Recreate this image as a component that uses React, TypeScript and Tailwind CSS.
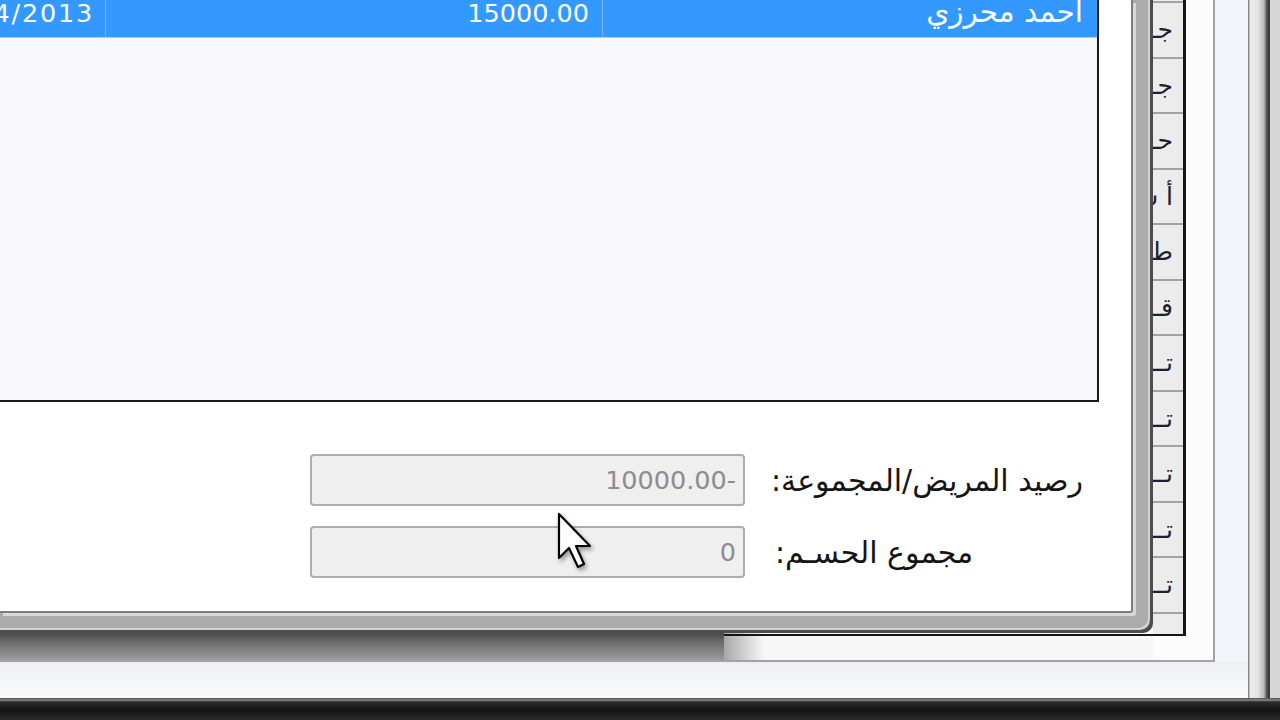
import React from 'react'

const cells = ['جــلسة', 'جــلسة', 'حــشوة', 'أ شعة', 'طــقم', 'قــلع', 'تــنظيف', 'تــبييض', 'تــاج', 'تــقويم', 'تــركيب']

function Cursor() {
  return (
    <svg
      className="absolute left-[557px] top-[512px] drop-shadow-[2px_3px_2px_rgba(0,0,0,0.35)]"
      width="40"
      height="60"
      viewBox="0 0 40 60"
    >
      <path
        d="M2 2 L2 46 L12 36 L21 55 L27 52 L19 34 L33 34 Z"
        fill="white"
        stroke="black"
        strokeWidth="2.2"
        strokeLinejoin="round"
      />
    </svg>
  )
}

function ListView() {
  return (
    <div className="w-[1099px] h-[402px] shrink-0 border-r-2 border-b-2 border-[#1a1a1a] bg-[#f8f8fc]">
      <div className="h-[38px] flex bg-[#3399ff] border-b border-[#b9cde3] text-white overflow-hidden">
        <div className="w-[106px] border-r border-[#7fb0e6] flex justify-end overflow-hidden pr-[11px]">
          <span className="shrink-0 whitespace-nowrap leading-[30px] -mt-[2px] tracking-[1.8px]">4/2013</span>
        </div>
        <div className="w-[497px] border-r border-[#7fb0e6] flex justify-end pr-[13px]">
          <span className="shrink-0 whitespace-nowrap leading-[30px] -mt-[2px]">15000.00</span>
        </div>
        <div className="flex-1 flex justify-end pr-[14px]">
          <span className="shrink-0 whitespace-nowrap leading-[30px] -mt-[3px] text-[29.5px]" dir="rtl">
            أحمد محرزي
          </span>
        </div>
      </div>
    </div>
  )
}

function Field({ label, value }: { label: string; value: string }) {
  return (
    <div className="flex items-center justify-end gap-[30px] pr-[48px]">
      <div className="w-[435px] h-[52px] rounded-[4px] border-2 border-[#adadad] bg-[#efefef] flex items-center justify-end pr-[7px] text-[#8d8d8d]">
        <span className="whitespace-nowrap">{value}</span>
      </div>
      <div className="w-[308px] whitespace-nowrap text-left text-[30px] text-[#141414]" dir="rtl">
        {label}
      </div>
    </div>
  )
}

function Dialog() {
  return (
    <div className="h-[633px] w-[1153px] pr-[20px] pb-[20px] bg-[#ababab] rounded-br-[10px] shadow-[inset_-3px_-3px_0_#4d4d4d,inset_-5px_-5px_0_#d2d2d2]">
      <div className="h-full w-full bg-white border-r-2 border-b-2 border-[#7e7e7e] rounded-br-[3px] shadow-[3px_3px_0_#d8d8d8] flex flex-col">
        <ListView />
        <div className="flex flex-col pt-[52px] gap-[20px]">
          <Field label="رصيد المريض/المجموعة:" value="10000.00-" />
          <Field label="مجموع الحسـم:" value="0" />
        </div>
      </div>
    </div>
  )
}

function TableColumn() {
  return (
    <div className="w-[33px] h-[636px] self-start flex flex-col border-r-[3px] border-b-2 border-[#151515] bg-[#ececec]">
      <div className="h-[3px] shrink-0 border-b-2 border-[#a2a2a2]" />
      {cells.map((c, i) => (
        <div
          key={i}
          className="h-[55.5px] shrink-0 border-b-2 border-[#a2a2a2] flex items-center justify-end pr-[10px] overflow-hidden"
        >
          <span className="shrink-0 whitespace-nowrap text-[25px] text-[#1d2030]" dir="rtl">
            {c}
          </span>
        </div>
      ))}
      <div className="flex-1" />
    </div>
  )
}

export default function App() {
  return (
    <div className="relative w-[1280px] h-[720px] overflow-hidden bg-[#f4f5f8] font-['DejaVu_Sans',sans-serif] text-[25.5px] flex flex-col">
      <div className="flex h-[698px]">
        <div className="w-[1248px] flex flex-col">
          <div className="h-[662px] flex bg-[#f3f5fa]">
            <div className="w-[1215px] h-[662px] border-r-2 border-b-2 border-[#a3a3a3] bg-[#fcfcfc] flex">
              <div className="w-[1153px] flex flex-col">
                <Dialog />
                <div className="flex h-[27px]">
                  <div className="w-[724px] bg-[linear-gradient(to_bottom,#4a4a4a_0%,#6c6c6c_35%,#9c9c9c_100%)]" />
                  <div className="flex-1 flex flex-col bg-[linear-gradient(to_right,#a8a8a8,#f7f7f7_40px)]">
                    <div className="h-[1px]" />
                    <div className="h-[2px] bg-[#151515]" />
                  </div>
                </div>
              </div>
              <TableColumn />
            </div>
          </div>
          <div className="flex-1 bg-[linear-gradient(to_bottom,#eeeff3,#fbfbfd)]" />
        </div>
        <div className="w-[20px] bg-[linear-gradient(to_right,#8a8a8a_0px,#8a8a8a_1px,#ededed_2px,#e4e4e4_10px,#b8b8b8_16px,#4a4a4a_19px)]" />
        <div className="flex-1 border-l-2 border-[#3a3a3a] bg-[#d6d6d6]" />
      </div>
      <div className="flex-1 bg-[linear-gradient(to_bottom,#4a4a4a_0px,#8a8a8a_2px,#2b2b2b_4px,#141414_12px,#2a2a2a_22px)]" />
      <Cursor />
    </div>
  )
}
